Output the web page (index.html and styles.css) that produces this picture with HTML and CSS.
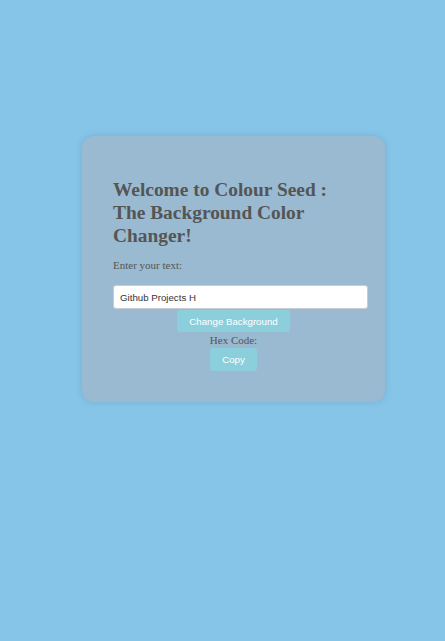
FILE: index.html
```html
<!DOCTYPE html>
<html>
<head>
<meta charset="utf-8">
<link rel="stylesheet" href="styles.css">
</head>
<body>
<div class="card">
  <h2 class="title">Welcome to Colour Seed : The Background Color Changer!</h2>
  <p class="label">Enter your text:</p>
  <input class="field" type="text" value="Github Projects H">
  <div class="center">
    <button class="btn btn-change">Change Background</button>
    <div class="hex">Hex Code:</div>
    <button class="btn btn-copy">Copy</button>
  </div>
</div>
</body>
</html>
```

FILE: styles.css
```css
html, body {
  margin: 0;
  padding: 0;
}
body {
  background: #86c5e8;
  width: 445px;
  height: 641px;
  padding-top: 136px;
  box-sizing: border-box;
  font-family: "Liberation Serif", serif;
  color: #555;
}
.card {
  box-sizing: border-box;
  width: 303px;
  height: 266px;
  margin-left: 82px;
  background: #99bad0;
  border-radius: 12px;
  padding: 42px 31px 30px 31px;
  box-shadow: 0 0 6px rgba(60, 110, 150, 0.25);
}
.title {
  margin: 0;
  font-size: 19.4px;
  font-weight: bold;
  line-height: 23px;
  color: #555;
  padding-right: 6px;
}
.label {
  margin: 11px 0 0;
  font-size: 11px;
  line-height: 14px;
}
.field {
  display: block;
  box-sizing: border-box;
  width: 255px;
  height: 24px;
  margin: 13px 0 0;
  padding: 0 6px;
  border: 1px solid #c8cdd2;
  border-radius: 3px;
  background: #fff;
  font-family: "Liberation Sans", Arial, sans-serif;
  font-size: 9.7px;
  color: #333;
}
.center {
  display: flex;
  flex-direction: column;
  align-items: center;
}
.btn {
  border: none;
  background: #8bcfdc;
  color: #fff;
  font-family: "Liberation Sans", Arial, sans-serif;
  font-size: 9.7px;
  border-radius: 3px;
  cursor: pointer;
}
.btn-change {
  margin-top: 1px;
  width: 113px;
  height: 22px;
}
.hex {
  font-size: 11px;
  line-height: 14px;
  margin-top: 1px;
}
.btn-copy {
  margin-top: 1px;
  width: 47px;
  height: 23px;
}
```
